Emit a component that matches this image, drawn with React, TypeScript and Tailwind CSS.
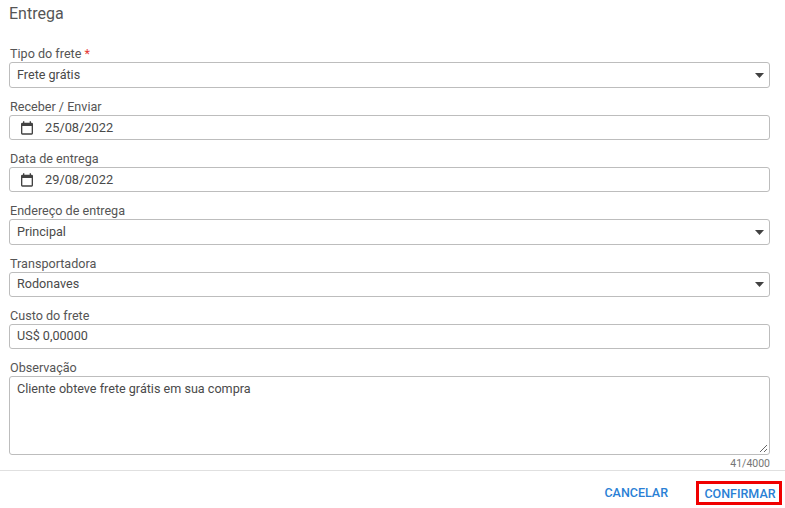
import React from 'react';

const inputBox = 'flex items-center w-full border border-[#bdbdbd] rounded-[3px] bg-white text-[12.6px] text-[#4a4a4a]';

const Field: React.FC<{ label: string; required?: boolean; children: React.ReactNode }> = ({ label, required, children }) => (
  <div className="flex flex-col">
    <label className="h-[18px] pl-[1px] text-[12.6px] leading-[19px] text-[#555]">
      {label}
      {required && <span className="text-[#e53935]"> *</span>}
    </label>
    {children}
  </div>
);

const SelectBox: React.FC<{ value: string; short?: boolean }> = ({ value, short }) => (
  <div className={`${inputBox} ${short ? 'h-[25px]' : 'h-[26px]'} justify-between pl-[7px] pr-[5px]`}>
    <span>{value}</span>
    <svg width="9" height="5" viewBox="0 0 9 5">
      <path d="M0 0h9L4.5 5z" fill="#424242" />
    </svg>
  </div>
);

const DateBox: React.FC<{ value: string }> = ({ value }) => (
  <div className={`${inputBox} h-[25px] pl-[9px]`}>
    <svg width="16" height="16" viewBox="0 0 24 24" fill="#424242">
      <path d="M19 4h-1V2h-2v2H8V2H6v2H5a2 2 0 0 0-2 2v14a2 2 0 0 0 2 2h14a2 2 0 0 0 2-2V6a2 2 0 0 0-2-2zm0 16H5V9h14v11z" />
    </svg>
    <span className="ml-[10px] text-[12.8px]">{value}</span>
  </div>
);

export default function App() {
  return (
    <div className="w-[785px] h-[508px] overflow-hidden bg-white font-['Roboto',sans-serif]">
      <div className="h-[44px] pl-[9px] pt-[5px] text-[16px] leading-[18px] text-[#555]">Entrega</div>
      <div className="flex flex-col gap-[9px] pl-[9px] pr-[15px]">
        <Field label="Tipo do frete" required>
          <SelectBox value="Frete grátis" />
        </Field>
        <Field label="Receber / Enviar">
          <DateBox value="25/08/2022" />
        </Field>
        <Field label="Data de entrega">
          <DateBox value="29/08/2022" />
        </Field>
        <Field label="Endereço de entrega">
          <SelectBox value="Principal" />
        </Field>
        <Field label="Transportadora">
          <SelectBox value="Rodonaves" short />
        </Field>
        <Field label="Custo do frete">
          <div className={`${inputBox} h-[25px] pl-[7px]`}>US$ 0,00000</div>
        </Field>
        <Field label="Observação">
          <div className="relative h-[79px] w-full border border-[#bdbdbd] rounded-[3px] pl-[7px] pt-[4px] text-[12.6px] leading-[16px] text-[#4a4a4a]">
            Cliente obteve frete grátis em sua compra
            <svg width="9" height="9" viewBox="0 0 9 9" className="absolute bottom-[1px] right-[1px]">
              <path d="M1 8l7-7M5 8l3-3" stroke="#666" strokeWidth="1" fill="none" />
            </svg>
          </div>
        </Field>
      </div>
      <div className="pr-[15px] pt-[2px] text-right text-[10.5px] leading-[13px] text-[#757575]">41/4000</div>
      <div className="border-t border-[#e0e0e0] flex items-start justify-end pt-[10px] pr-[3px]">
        <button className="h-[24px] pt-[1px] text-[12.5px] font-medium text-[#2a7fd5] mr-[28px]">CANCELAR</button>
        <button className="h-[24px] w-[86px] pt-[1px] pl-[2px] border-[3px] border-[#f00000] text-[12.5px] font-medium text-[#2a7fd5]">CONFIRMAR</button>
      </div>
    </div>
  );
}
